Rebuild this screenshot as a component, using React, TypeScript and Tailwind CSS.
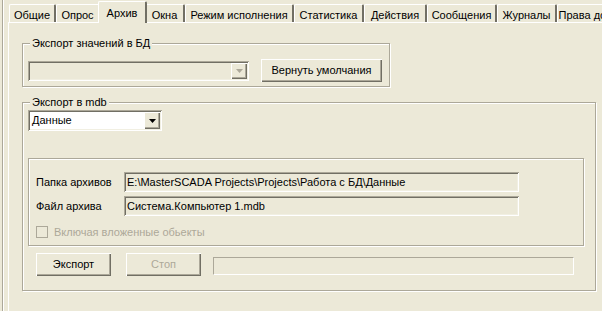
import React from "react";

const tabs = [
  { label: "Общие", w: 47 },
  { label: "Опрос", w: 44 },
  { label: "Архив", w: 45, active: true },
  { label: "Окна", w: 40 },
  { label: "Режим исполнения", w: 109 },
  { label: "Статистика", w: 70 },
  { label: "Действия", w: 63 },
  { label: "Сообщения", w: 70 },
  { label: "Журналы", w: 60 },
  { label: "Права доступа", w: 80 },
];

const raised =
  "shadow-[inset_1px_1px_0_#ffffff,inset_-1px_-1px_0_#716f64,inset_-2px_-2px_0_#aca899]";
const sunken =
  "shadow-[inset_1px_1px_0_#aca899,inset_-1px_-1px_0_#ffffff,inset_2px_2px_0_#716f64,inset_-2px_-2px_0_#f1efe2]";
const etched = "border border-[#aca899] shadow-[inset_1px_1px_0_#ffffff,1px_1px_0_#ffffff]";

function Arrow({ disabled }: { disabled?: boolean }) {
  return (
    <svg width="7" height="4" viewBox="0 0 7 4">
      <path d="M0 0h7L3.5 4z" fill={disabled ? "#aca899" : "#000"} />
    </svg>
  );
}

export default function App() {
  return (
    <div
      className="relative w-[602px] h-[311px] overflow-hidden bg-[#ece9d8] text-[11px] text-black"
      style={{ fontFamily: '"Liberation Sans", Arial, sans-serif' }}
    >
      <div className="flex h-full">
        <div className="ml-[2px] w-[2px] h-full border-l border-[#aca899] border-r border-r-white" />
        <div className="ml-[4px] flex-1 flex flex-col min-w-0">
          {/* tab strip */}
          <div className="flex h-[22px] items-end pl-[1px] whitespace-nowrap">
            {tabs.map((t) =>
              t.active ? (
                <div
                  key={t.label}
                  className="relative z-10 -mx-[2px] bg-[#ece9d8] border-l border-t border-white border-r-2 border-r-[#716f64] rounded-t-[2px] flex items-start justify-center pt-[3px] shrink-0"
                  style={{ width: t.w + 4, marginBottom: -1, height: 22 }}
                >
                  {t.label}
                </div>
              ) : (
                <div
                  key={t.label}
                  className="h-[18px] border-l border-t border-white border-r-2 border-r-[#716f64] rounded-t-[2px] flex items-start justify-center pt-[2px] shrink-0"
                  style={{ width: t.w }}
                >
                  {t.label}
                </div>
              )
            )}
          </div>
          {/* tab page */}
          <div className="flex-1 border-l border-t border-white pl-[13px] pt-[14px]">
            <fieldset className={`w-[368px] h-[50px] ${etched} px-[5px] m-0 min-w-0`}>
              <legend className="ml-[2px] px-[2px] bg-[#ece9d8] leading-[13px]">Экспорт значений в БД</legend>
              <div className="flex items-start mt-[11px]">
                <div className={`w-[221px] h-[20px] bg-[#ece9d8] ${sunken} flex justify-end p-[2px]`}>
                  <div className={`w-[16px] h-[16px] ${raised} flex items-center justify-center`}>
                    <Arrow disabled />
                  </div>
                </div>
                <div className={`ml-[12px] -mt-[2px] w-[121px] h-[23px] ${raised} flex items-center justify-center`}>
                  Вернуть умолчания
                </div>
              </div>
            </fieldset>

            <fieldset className={`mt-[9px] w-[574px] h-[195px] ${etched} px-[5px] m-0 min-w-0`}>
              <legend className="ml-[2px] px-[2px] bg-[#ece9d8] leading-[13px]">Экспорт в mdb</legend>
              <div className={`mt-[1px] w-[134px] h-[21px] bg-white ${sunken} flex items-center justify-between pl-[4px] pr-[2px]`}>
                <span>Данные</span>
                <div className={`w-[16px] h-[17px] bg-[#ece9d8] ${raised} flex items-center justify-center`}>
                  <Arrow />
                </div>
              </div>
              <div className={`mt-[27px] w-[556px] h-[88px] ${etched} pl-[7px] pt-[13px]`}>
                <div className="flex items-center h-[20px]">
                  <span className="w-[88px]">Папка архивов</span>
                  <div className={`w-[395px] h-[20px] ${sunken} flex items-center pl-[3px]`}>
                    E:\MasterSCADA Projects\Projects\Работа с БД\Данные
                  </div>
                </div>
                <div className="flex items-center h-[20px] mt-[4px]">
                  <span className="w-[88px]">Файл архива</span>
                  <div className={`w-[395px] h-[20px] ${sunken} flex items-center pl-[3px]`}>
                    Система.Компьютер 1.mdb
                  </div>
                </div>
                <div className="flex items-center mt-[8px] text-[#aca899]">
                  <div className="w-[12px] h-[12px] border border-[#aca899] bg-[#ece9d8]" />
                  <span className="ml-[6px]">Включая вложенные обьекты</span>
                </div>
              </div>
              <div className="flex items-start mt-[7px] pl-[8px]">
                <div className={`w-[75px] h-[23px] ${raised} flex items-center justify-center`}>Экспорт</div>
                <div className={`ml-[15px] w-[75px] h-[23px] ${raised} flex items-center justify-center text-[#aca899]`}>
                  Стоп
                </div>
                <div className="ml-[12px] mt-[4px] w-[361px] h-[18px] border border-[#aca899] border-r-white border-b-white" />
              </div>
            </fieldset>
          </div>
        </div>
      </div>
    </div>
  );
}
